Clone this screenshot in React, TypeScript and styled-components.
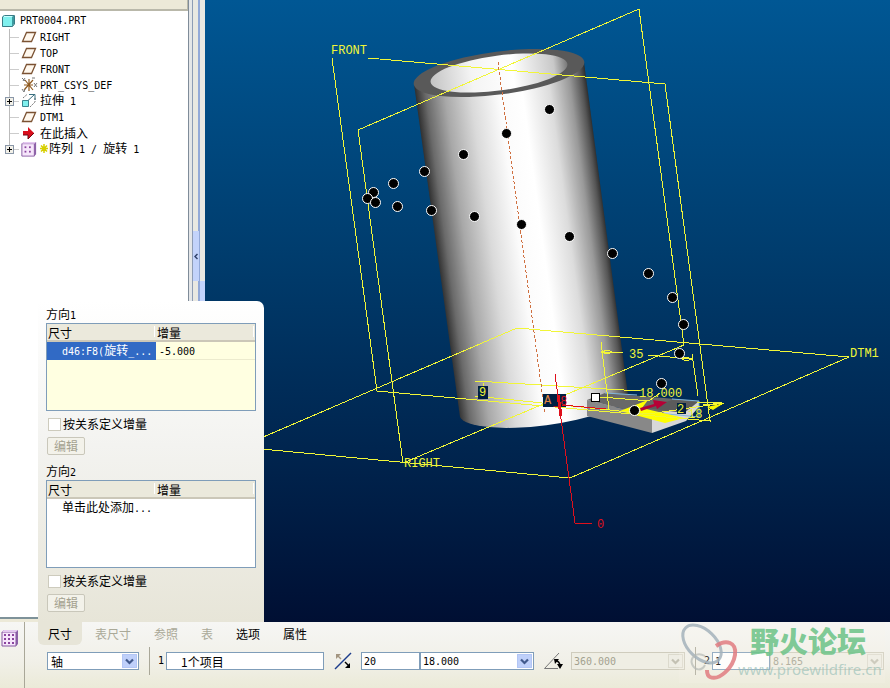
import React from "react";
import styled, { createGlobalStyle, css } from "styled-components";

const zh = `"Noto Sans CJK SC", sans-serif`;
const mono = `"DejaVu Sans Mono", "Noto Sans CJK SC", monospace`;

const Global = createGlobalStyle`
  * { box-sizing: border-box; }
  html, body { margin: 0; }
  body { font: 12px/16px ${zh}; color: #000; background: #ece9d8; }
  button, input, select { font: inherit; color: inherit; margin: 0; border-radius: 0; }
`;

const Page = styled.div`
  min-height: 100vh;
  display: flex;
  flex-direction: column;
`;

const Main = styled.main`
  position: relative;
  flex: 1;
  display: flex;
  min-height: 0;
`;

/* ---------- model tree ---------- */

const TreePanel = styled.aside`
  width: 188px;
  flex: none;
  display: flex;
  flex-direction: column;
  background: #fff;
`;

const TreeHeader = styled.div`
  height: 11px;
  background: #ece9d8;
  border-bottom: 2px solid #b9b8aa;
  border-right: 1px solid #b9b8aa;
`;

const TreeFooter = styled.div`
  height: 5px;
  margin-top: auto;
  border-top: 2px solid #7e9299;
  background: #ece9d8;
`;

const TreeList = styled.ul`
  list-style: none;
  margin: 0;
  padding: 2px 0 0 2px;
`;

const ChildList = styled.ul`
  list-style: none;
  margin: 0;
  padding: 0 0 0 3px;
`;

const TreeRow = styled.div`
  height: 16px;
  display: flex;
  align-items: center;
  white-space: pre;
`;

const Branch = styled.span<{ $last?: boolean }>`
  width: 16px;
  height: 16px;
  flex: none;
  display: flex;
  align-items: center;
  background:
    linear-gradient(#bbb, #bbb) 4px 0 / 1px ${(p) => (p.$last ? "8px" : "16px")} no-repeat,
    linear-gradient(#ccc, #ccc) 4px 8px / 10px 1px no-repeat;
`;

const Expander = styled.button`
  width: 9px;
  height: 9px;
  padding: 0;
  border: 1px solid #8a97a8;
  background: #f2f0e8;
  display: flex;
`;

const IconSlot = styled.span`
  width: 16px;
  height: 16px;
  flex: none;
  margin-right: 2px;
  svg { display: block; }
`;

const RootSlot = styled(IconSlot)`
  width: 14px;
  margin-right: 4px;
`;

const ChildSlot = styled(IconSlot)`
  width: 17px;
`;

const Latin = styled.span`
  font: 10px/16px ${mono};
`;

const Star = styled.svg`
  width: 8px;
  height: 9px;
  margin-right: 1px;
  color: #d6cf00;
`;

/* ---------- splitter ---------- */

const Splitter = styled.div`
  width: 17px;
  flex: none;
  display: flex;
  align-items: stretch;
  border-left: 1px solid #7f8c99;
  background: #e9e8e2;
`;

const Groove = styled.div`
  width: 4px;
  background: #e4e6e8;
  border-right: 1px solid #8d9cb5;
`;

const Track = styled.div`
  width: 7px;
  border-right: 2px solid #93a9d8;
  background: #e9e8e2;
  padding-top: 231px;
`;

const Handle = styled.button`
  display: flex;
  align-items: center;
  justify-content: center;
  width: 6px;
  height: 50px;
  padding: 0;
  border: 0;
  background: #c3d3fb;
`;

const Edge = styled.div`
  flex: 1;
  background: linear-gradient(#e9e8e2 281px, #c3d3fb 281px);
`;

/* ---------- graphics window ---------- */

const Viewport = styled.section`
  flex: 1;
  min-width: 0;
  display: flex;
  background: linear-gradient(#005794, #003d6e 40%, #00254f 72%, #000f33);
  svg { display: block; width: 100%; height: 100%; min-height: 622px; }
`;

/* ---------- slide-up panel ---------- */

const Popup = styled.section`
  position: absolute;
  left: 38px;
  bottom: 0;
  width: 226px;
  padding: 5px 8px 2px;
  border-radius: 0 7px 0 0;
  background: linear-gradient(#fff, #f3f3f0 45%, #e7e5d8);
`;

const Direction = styled.section`
  display: flex;
  flex-direction: column;
  align-items: flex-start;
  padding-bottom: 8px;
`;

const Title = styled.h2`
  margin: 0;
  height: 17px;
  font: 12px/16px ${zh};
`;

const TableFrame = styled.div<{ $active?: boolean }>`
  width: 210px;
  height: 88px;
  border: 1px solid #7f9db9;
  background: ${(p) => (p.$active ? "#ffffe1" : "#fff")};
`;

const Table = styled.table`
  width: 100%;
  border-collapse: collapse;
  table-layout: fixed;
  th, td { height: 17px; padding: 0 1px; line-height: 15px; text-align: left; font-weight: normal; white-space: nowrap; }
  thead { background: #ebe9dc; }
  th { border-bottom: 2px solid #cbc7b8; background: linear-gradient(#fff, #fff) right 1px top 2px / 1px 11px no-repeat; }
  th:first-child { width: 109px; }
  td span { line-height: 15px; }
`;

const NameCell = styled.td<{ $selected?: boolean }>`
  && { padding-left: 15px; }
  ${(p) => p.$selected && css`background: #316ac5; color: #fff;`}
`;

const ValueCell = styled.td`
  && { padding-left: 3px; }
  border-bottom: 1px solid #ecebce;
`;

const Check = styled.label`
  display: flex;
  align-items: center;
  gap: 2px;
  height: 14px;
  margin: 6px 0 6px 2px;
  input { appearance: none; width: 13px; height: 13px; background: #fff; border: 1px solid #cdcbbd; }
  input:checked { background: #316ac5; }
`;

const EditButton = styled.button`
  margin-left: 1px;
  width: 38px;
  height: 18px;
  padding: 0;
  line-height: 14px;
  border: 1px solid #c9c7ba;
  && { border-radius: 2px; color: #a3a18f; }
  background: #f3f2ea;
`;

/* ---------- dashboard ---------- */

const Dashboard = styled.footer`
  position: relative;
  height: 66px;
  flex: none;
  display: flex;
  background: linear-gradient(#f6f6f4, #f1f0e8 60%, #ebead8);
`;

const FeatureCell = styled.div`
  width: 25px;
  padding: 7px 0 0 1px;
  border-right: 1px solid #a9a798;
`;

const Body = styled.div`
  flex: 1;
  min-width: 0;
  padding-left: 13px;
`;

const Tabs = styled.nav`
  display: flex;
  gap: 3px;
  height: 23px;
`;

const Tab = styled.button<{ $active?: boolean }>`
  border: 0;
  padding: 4px 10px 3px;
  line-height: 16px;
  white-space: nowrap;
  background: ${(p) => (p.$active ? "#e7e5d8" : "transparent")};
  && { border-radius: 0 0 6px 6px; }
  &:disabled { color: #aaa998; }
`;

const Controls = styled.div`
  display: flex;
  align-items: center;
  height: 30px;
  padding: 2px 0 0 9px;
`;

const Rule = styled.span`
  width: 1px;
  height: 28px;
  flex: none;
  background: #a9a798;
  margin: 0 8px 0 10px;
`;

const Index = styled.label`
  width: 8px;
  flex: none;
  font: 10px/16px ${mono};
`;

const box = css`
  height: 18px;
  border: 1px solid #7f9db9;
  background: #fff;
  padding: 0 2px;
  outline: none;
  &:disabled { border-color: #cfccbd; background: #efeee4; color: #a3a18f; opacity: 1; }
`;

const Field = styled.input<{ $w: number; $indent?: boolean; $zh?: boolean }>`
  ${box}
  width: ${(p) => p.$w}px;
  && { font: ${(p) => (p.$zh ? `12px ${zh}` : `10px ${mono}`)}; padding-left: ${(p) => (p.$indent ? 14 : 2)}px; }
`;

const SelectWrap = styled.span<{ $w: number }>`
  position: relative;
  display: flex;
  flex: none;
  width: ${(p) => p.$w}px;
`;

const Select = styled.select<{ $zh?: boolean }>`
  ${box}
  appearance: none;
  width: 100%;
  && { font: ${(p) => (p.$zh ? `12px ${zh}` : `10px ${mono}`)}; padding-left: ${(p) => (p.$zh ? 3 : 2)}px; }
`;

const Arrow = styled.span<{ $off?: boolean }>`
  position: absolute;
  right: 2px;
  top: 2px;
  width: 15px;
  height: 14px;
  display: flex;
  align-items: center;
  justify-content: center;
  pointer-events: none;
  background: ${(p) => (p.$off ? "#eeede4" : "#bfd0fa")};
  border: 1px solid ${(p) => (p.$off ? "#dcdacd" : "#b3c6f5")};
  color: ${(p) => (p.$off ? "#c3c1b3" : "#41598c")};
`;

const Tool = styled.button`
  width: 18px;
  height: 18px;
  flex: none;
  padding: 0;
  border: 0;
  background: none;
  margin: 0 9px 0 10px;
  svg { display: block; }
`;

const Watermark = styled.div`
  position: absolute;
  left: 679px;
  top: 0;
  width: 206px;
  height: 61px;
  display: flex;
  pointer-events: none;
  background: rgba(248, 247, 236, 0.2);
`;

const Brand = styled.div`
  margin-left: -3px;
  display: flex;
  flex-direction: column;
  white-space: nowrap;
`;

const BrandName = styled.span`
  margin-left: 12px;
  font: 900 29px/36px ${zh};
  color: rgba(112, 196, 138, 0.9);
`;

const BrandUrl = styled.span`
  font: 15px/22px "Noto Sans", sans-serif;
  color: rgba(150, 190, 182, 0.65);
`;

/* ---------- icons ---------- */

const PlaneIcon = () => (
  <svg width="16" height="16" viewBox="0 0 16 16">
    <path d="M5.500 3.500H14.500L10.500 12.500H1.500Z" fill="#fff8ee" stroke="#7b5233" strokeWidth="1.300" />
  </svg>
);

const PartIcon = () => (
  <svg width="14" height="16" viewBox="0 0 14 16">
    <path d="M0 4L2 2H12V11L10 14H0Z" fill="#3c9aa0" />
    <path d="M0 4H10V14H0Z" fill="#80f0ee" />
    <path d="M0 4L2 2H12L10 4Z" fill="#c6ffff" />
    <path d="M0.500 4L2.500 2.500H12.500V11L10.500 13.500H0.500Z" fill="none" stroke="#3a7c86" />
  </svg>
);

const CsysIcon = () => (
  <svg width="17" height="16" viewBox="0 0 17 16" fill="none">
    <path d="M8 2V14M3 8H12M4 3L12 13M12 3L3 13" stroke="#8f5a20" strokeWidth="1.200" />
    <path d="M1 1L4 4M4 1L2 4M13 6L16 10M16 6L13 10M1 12L3 15L4 12M11 1L14 1" stroke="#777" />
  </svg>
);

const ExtrudeIcon = () => (
  <svg width="16" height="16" viewBox="0 0 16 16" fill="none">
    <path d="M1.500 7.500H7.500V13.500H1.500Z" fill="#80f0ee" stroke="#3a8590" />
    <path d="M2 5L6 1.500M14 5V9L9 14" stroke="#777" strokeDasharray="2 1" />
    <path d="M7 7.500L13 2M8 1.500H14V7" stroke="#3a7080" />
  </svg>
);

const InsertIcon = () => (
  <svg width="16" height="16" viewBox="0 0 16 16">
    <path d="M2 6H7V2L13 8L7 14V10H2Z" fill="#d90f1c" />
    <path d="M2 10H7V14L13 8" fill="none" stroke="#6d0710" />
  </svg>
);

const PatternIcon = ({ size, grid }: { size: number; grid: number[] }) => (
  <svg width={size} height={size} viewBox="0 0 18 18">
    <path d="M1 3L3 1H17V15L15 17H1Z" fill="#8d62a8" />
    <path d="M1 3H15V17H1Z" fill="#f6e6fb" stroke="#8558a0" />
    <path d="M1 3L3 1H17L15 3Z" fill="#e4c9f0" />
    <g fill="#8a449e">
      {grid.map((y) => grid.map((x) => <rect key={`${x}-${y}`} x={x} y={y + 2} width="2" height="2" />))}
    </g>
  </svg>
);

const StarIcon = () => (
  <Star viewBox="0 0 8 9" fill="none" stroke="currentColor" strokeWidth="1.500">
    <path d="M4 0V9M0 4.500H8M1 1.500L7 7.500M7 1.500L1 7.500" />
  </Star>
);

const Plus = () => (
  <svg width="7" height="7" viewBox="0 0 7 7">
    <path d="M1 3.500H6M3.500 1V6" stroke="#000" />
  </svg>
);

const Chevron = () => (
  <svg width="9" height="7" viewBox="0 0 9 7" fill="none">
    <path d="M1 1.500L4.500 5L8 1.500" stroke="currentColor" strokeWidth="2.200" />
  </svg>
);

const FlipIcon = () => (
  <svg width="18" height="18" viewBox="0 0 18 18">
    <path d="M1 17L17 1" stroke="#1c3c8c" strokeWidth="1.500" />
    <path d="M3 3L7 7" stroke="#a39580" strokeWidth="1.500" />
    <path d="M2 2H7L2 7Z" fill="#a39580" />
    <path d="M11 10L15 14" stroke="#000" strokeWidth="1.500" />
    <path d="M16 11V16H11Z" fill="#000" />
  </svg>
);

const AngleIcon = () => (
  <svg width="19" height="18" viewBox="0 0 19 18" fill="none">
    <path d="M15 1L0.500 16.500H14" stroke="#777" />
    <path d="M11 8C14 9 16 11 16 14" stroke="#000" strokeWidth="1.500" />
    <path d="M10 7H15L11 12ZM13 12H19L16 17Z" fill="#000" />
  </svg>
);

const LogoMark = () => (
  <svg width="62" height="61" viewBox="0 0 62 61" fill="none">
    <ellipse cx="23" cy="22" rx="23" ry="14" transform="rotate(44 23 22)" stroke="#a3b2bb" strokeWidth="3" opacity="0.850" />
    <path d="M26 34C17 29 11 36 13 42C16 49 23 49 26 43" stroke="#b5b9b5" strokeWidth="2" opacity="0.700" />
    <path d="M37 24C47 17 58 20 56 33C54 46 40 59 31 55C29 54 28 51 28 48" stroke="#e07b80" strokeWidth="4" opacity="0.850" />
  </svg>
);

/* ---------- scene ---------- */

const handles: [number, number][] = [
  [549, 109], [506, 133], [463, 154], [424, 171], [393, 183], [373, 192], [367, 198],
  [375, 202], [397, 206], [431, 210], [474, 216], [521, 224], [569, 236], [612, 253],
  [648, 273], [672, 297], [683, 324], [679, 353], [661, 383], [634, 410],
];

const Annotations = styled.g`
  font: 12px "Liberation Mono", monospace;
  fill: #f1f638;
`;

const Scene = () => (
  <svg viewBox="205 0 685 622" preserveAspectRatio="xMinYMin slice" role="img" aria-label="PRT0004">
    <defs>
      <linearGradient id="wall" gradientUnits="userSpaceOnUse" x1="414" y1="84" x2="584" y2="61">
        <stop offset="0" stopColor="#303030" />
        <stop offset="0.060" stopColor="#6a6a6a" />
        <stop offset="0.170" stopColor="#a8a8a8" />
        <stop offset="0.320" stopColor="#dadada" />
        <stop offset="0.480" stopColor="#fbfbfb" />
        <stop offset="0.620" stopColor="#fff" />
        <stop offset="0.780" stopColor="#dcdcdc" />
        <stop offset="0.900" stopColor="#999" />
        <stop offset="0.970" stopColor="#555" />
        <stop offset="1" stopColor="#2c2c2c" />
      </linearGradient>
      <linearGradient id="bore">
        <stop offset="0" stopColor="#c4c4c4" />
        <stop offset="0.300" stopColor="#f4f4f4" />
        <stop offset="0.600" stopColor="#fff" />
        <stop offset="0.900" stopColor="#c8c8c8" />
        <stop offset="1" stopColor="#777" />
      </linearGradient>
    </defs>

    <path d="M414 84L460 417A85 21 -7.500 0 0 628 395L584 62Z" fill="url(#wall)" />
    <ellipse cx="499" cy="73" rx="86" ry="21.500" transform="rotate(-7.500 499 73)" fill="#595959" />
    <ellipse cx="499" cy="73" rx="69" ry="17.500" transform="rotate(-7.500 499 73)" fill="url(#bore)" />

    <path d="M587 400L605 393L699 401L652 416Z" fill="#686868" />
    <path d="M587 400L652 416V433L587 416Z" fill="#888" />
    <path d="M652 416L699 401V407L686 421L652 433Z" fill="#d8d8d8" />
    <path d="M605 393L637 395M672 399L699 401V416M645 412L700 417" fill="none" stroke="#7fb6dc" />
    <path d="M620 411L648 400L642 408L684 418L665 423Z" fill="#ff0" />
    <path d="M646 408L672 400L698 402L684 413Z" fill="#5b5b5b" />

    <g fill="none" stroke="#f1f638" strokeWidth="1" shapeRendering="crispEdges">
      <path d="M332 58L377 391L710 421L665 84L368 58" />
      <path d="M358 130L639 9L684 345L403 463Z" />
      <path d="M849 357L517 328L240 447L570 478Z" />
      <path d="M475 381L640 391M483 383V398" />
      <path d="M601 342L609 409M601 352H623M648 355L692 359M692 354L698 396" />
      <path d="M601 352L608 350L612 352L608 354ZM692 359L685 357L682 359L686 361Z" />
      <path d="M475 396L600 409L648 414L724 403M703 405L724 403L708 410M706 420H711M697 402H722M600 397L650 401M650 400L660 393" />
    </g>
    <path d="M707 407L724 403L713 410Z" fill="#f5f500" />
    <path d="M498 62L545 414" stroke="#cf7040" strokeDasharray="3 2" shapeRendering="crispEdges" />

    <rect x="543" y="394" width="23" height="13" fill="#001f42" />
    <rect x="478" y="386" width="10" height="13" fill="#001f42" />
    <rect x="677" y="403" width="9" height="11" fill="#001f42" />
    <g fill="none" stroke="#df101c" shapeRendering="crispEdges">
      <path d="M555 374L575 523H592" strokeWidth="1" />
      <path d="M558 395L561 416" strokeWidth="3" />
      <path d="M562 405L606 409" />
    </g>
    <path d="M640 408L654 404L653 400L667 402L657 409L656 406L641 411Z" fill="#b60036" />

    <Annotations>
      <text x="331" y="54">FRONT</text>
      <text x="404" y="467">RIGHT</text>
      <text x="850" y="357">DTM1</text>
      <text x="629" y="358">35</text>
      <text x="639" y="397">18.000</text>
      <text x="677" y="413">2</text>
      <text x="688" y="418">18</text>
      <text x="479" y="396">9</text>
      <text x="544" y="404" fill="#e08540">A</text>
      <text x="553" y="405" fill="#df101c">_8</text>
      <text x="597" y="528" fill="#df101c">0</text>
    </Annotations>

    <rect x="591.500" y="393.500" width="8" height="8" fill="#fff" stroke="#000" />
    <g fill="#000" stroke="#fff">
      {handles.map(([x, y]) => (
        <circle key={`${x}-${y}`} cx={x + 0.5} cy={y + 0.5} r="5" />
      ))}
    </g>
  </svg>
);

/* ---------- composed parts ---------- */

type TreeNode = { icon: React.ReactNode; label: React.ReactNode; expandable?: boolean };

const nodes: TreeNode[] = [
  { icon: <PlaneIcon />, label: <Latin>RIGHT</Latin> },
  { icon: <PlaneIcon />, label: <Latin>TOP</Latin> },
  { icon: <PlaneIcon />, label: <Latin>FRONT</Latin> },
  { icon: <CsysIcon />, label: <Latin>PRT_CSYS_DEF</Latin> },
  { icon: <ExtrudeIcon />, label: <>拉伸<Latin> 1</Latin></>, expandable: true },
  { icon: <PlaneIcon />, label: <Latin>DTM1</Latin> },
  { icon: <InsertIcon />, label: "在此插入" },
  {
    icon: <PatternIcon size={16} grid={[4, 9]} />,
    label: <><StarIcon />阵列<Latin> 1 / </Latin>旋转<Latin> 1</Latin></>,
    expandable: true,
  },
];

type DirectionProps = { index: number; name: React.ReactNode; value?: string; active?: boolean };

const DirectionPanel = ({ index, name, value, active }: DirectionProps) => (
  <Direction>
    <Title>方向<Latin>{index}</Latin></Title>
    <TableFrame $active={active}>
      <Table>
        <thead>
          <tr><th>尺寸</th><th>增量</th></tr>
        </thead>
        <tbody>
          <tr>
            <NameCell $selected={active}>{name}</NameCell>
            {value ? <ValueCell><Latin>{value}</Latin></ValueCell> : <td />}
          </tr>
        </tbody>
      </Table>
    </TableFrame>
    <Check><input type="checkbox" />按关系定义增量</Check>
    <EditButton disabled>编辑</EditButton>
  </Direction>
);

type DropDownProps = { w: number; value: string; label: string; zh?: boolean; disabled?: boolean };

const DropDown = ({ w, value, label, zh: chinese, disabled }: DropDownProps) => (
  <SelectWrap $w={w}>
    <Select $zh={chinese} aria-label={label} disabled={disabled} defaultValue={value}>
      <option>{value}</option>
    </Select>
    <Arrow $off={disabled}><Chevron /></Arrow>
  </SelectWrap>
);

export default function App() {
  return (
    <Page>
      <Global />
      <Main>
        <TreePanel>
          <TreeHeader />
          <TreeList>
            <li>
              <TreeRow><RootSlot><PartIcon /></RootSlot><Latin>PRT0004.PRT</Latin></TreeRow>
              <ChildList>
                {nodes.map((n, i) => (
                  <li key={i}>
                    <TreeRow>
                      <Branch $last={i === nodes.length - 1}>
                        {n.expandable && <Expander aria-label="展开"><Plus /></Expander>}
                      </Branch>
                      <ChildSlot>{n.icon}</ChildSlot>
                      <span>{n.label}</span>
                    </TreeRow>
                  </li>
                ))}
              </ChildList>
            </li>
          </TreeList>
          <TreeFooter />
        </TreePanel>
        <Splitter>
          <Groove />
          <Track>
            <Handle aria-label="折叠">
              <svg width="4" height="7" viewBox="0 0 4 7" fill="none">
                <path d="M3.500 1L1 3.500L3.500 6" stroke="#31436c" strokeWidth="1.500" />
              </svg>
            </Handle>
          </Track>
          <Edge />
        </Splitter>
        <Viewport><Scene /></Viewport>
        <Popup>
          <DirectionPanel index={1} active value="-5.000" name={<><Latin>d46:F8(</Latin>旋转<Latin>_...</Latin></>} />
          <DirectionPanel index={2} name={<>单击此处添加<Latin>...</Latin></>} />
        </Popup>
      </Main>
      <Dashboard>
        <FeatureCell><PatternIcon size={18} grid={[3, 7, 11]} /></FeatureCell>
        <Body>
          <Tabs>
            <Tab $active>尺寸</Tab>
            <Tab disabled>表尺寸</Tab>
            <Tab disabled>参照</Tab>
            <Tab disabled>表</Tab>
            <Tab>选项</Tab>
            <Tab>属性</Tab>
          </Tabs>
          <Controls>
            <DropDown w={92} value="轴" label="阵列类型" zh />
            <Rule />
            <Index htmlFor="dir1">1</Index>
            <Field id="dir1" $w={158} $indent $zh defaultValue="1个项目" />
            <Tool aria-label="反向"><FlipIcon /></Tool>
            <Field $w={59} defaultValue="20" aria-label="数量" />
            <DropDown w={114} value="18.000" label="角度" />
            <Tool aria-label="角度范围"><AngleIcon /></Tool>
            <DropDown w={114} value="360.000" label="总角度" disabled />
            <Rule />
            <Index htmlFor="dir2">2</Index>
            <Field id="dir2" $w={58} defaultValue="1" />
            <DropDown w={114} value="8.165" label="间距" disabled />
          </Controls>
        </Body>
        <Watermark>
          <LogoMark />
          <Brand>
            <BrandName>野火论坛</BrandName>
            <BrandUrl>www.proewildfire.cn</BrandUrl>
          </Brand>
        </Watermark>
      </Dashboard>
    </Page>
  );
}
